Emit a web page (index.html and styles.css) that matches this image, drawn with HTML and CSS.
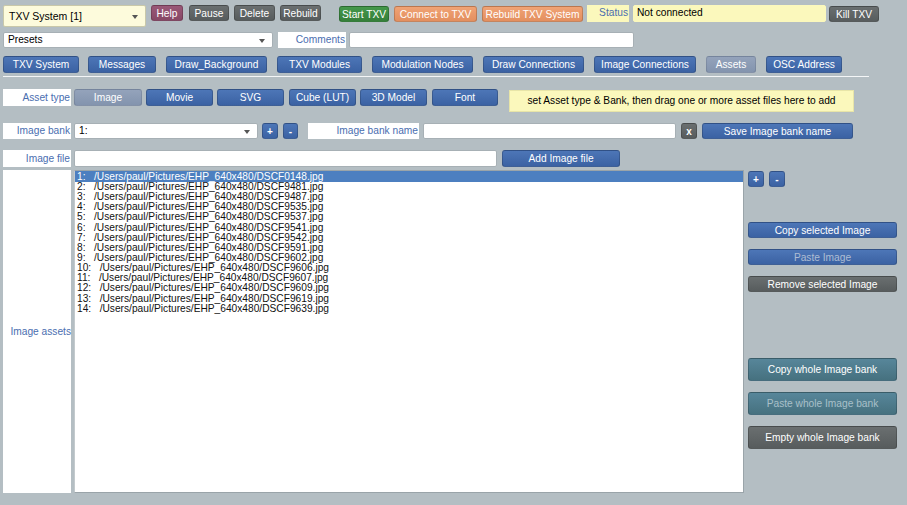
FILE: index.html
```html
<!DOCTYPE html>
<html>
<head>
<meta charset="utf-8">
<link rel="stylesheet" href="styles.css">
</head>
<body>
<div class="app">
  <div class="row r1">
    <div class="select sel-yellow w-txv">TXV System [1]<span class="caret"></span></div>
    <button class="btn purple w-help">Help</button>
    <button class="btn gray w-pause">Pause</button>
    <button class="btn gray w-delete">Delete</button>
    <button class="btn gray w-rebuild">Rebuild</button>
    <button class="btn green w-start">Start TXV</button>
    <button class="btn orange w-connect">Connect to TXV</button>
    <button class="btn orange w-rebuildtxv">Rebuild TXV System</button>
    <div class="label yellow w-status">Status</div>
    <div class="field yellow w-notconn">Not connected</div>
    <button class="btn gray w-kill">Kill TXV</button>
  </div>

  <div class="row r2">
    <div class="select w-presets">Presets<span class="caret"></span></div>
    <div class="label w-comments">Comments</div>
    <div class="field w-commentsin"></div>
  </div>

  <div class="row tabs">
    <button class="btn blue w-t1">TXV System</button>
    <button class="btn blue w-t2">Messages</button>
    <button class="btn blue w-t3">Draw_Background</button>
    <button class="btn blue w-t4">TXV Modules</button>
    <button class="btn blue w-t5">Modulation Nodes</button>
    <button class="btn blue w-t6">Draw Connections</button>
    <button class="btn blue w-t7">Image Connections</button>
    <button class="btn sel w-t8">Assets</button>
    <button class="btn blue w-t9">OSC Address</button>
  </div>

  <div class="rule"></div>

  <div class="row r-asset">
    <div class="label w-lbl">Asset type</div>
    <button class="btn sel w-a1">Image</button>
    <button class="btn blue w-a2">Movie</button>
    <button class="btn blue w-a3">SVG</button>
    <button class="btn blue w-a4">Cube (LUT)</button>
    <button class="btn blue w-a5">3D Model</button>
    <button class="btn blue w-a6">Font</button>
    <div class="hint">set Asset type &amp; Bank, then drag one or more asset files here to add</div>
  </div>

  <div class="row r-bank">
    <div class="label w-lbl">Image bank</div>
    <div class="select w-banksel">1:<span class="caret"></span></div>
    <button class="btn blue small w-plus">+</button>
    <button class="btn blue small w-minus">-</button>
    <div class="label w-bankname">Image bank name</div>
    <div class="field w-banknamein"></div>
    <button class="btn gray small w-x">x</button>
    <button class="btn blue w-save">Save Image bank name</button>
  </div>

  <div class="row r-file">
    <div class="label w-lbl">Image file</div>
    <div class="field w-filein"></div>
    <button class="btn blue w-add">Add Image file</button>
  </div>

  <div class="row r-list">
    <div class="label-col">Image assets</div>
    <div class="list">
      <div class="item selected">1:&nbsp;&nbsp; /Users/paul/Pictures/EHP_640x480/DSCF0148.jpg</div>
      <div class="item">2:&nbsp;&nbsp; /Users/paul/Pictures/EHP_640x480/DSCF9481.jpg</div>
      <div class="item">3:&nbsp;&nbsp; /Users/paul/Pictures/EHP_640x480/DSCF9487.jpg</div>
      <div class="item">4:&nbsp;&nbsp; /Users/paul/Pictures/EHP_640x480/DSCF9535.jpg</div>
      <div class="item">5:&nbsp;&nbsp; /Users/paul/Pictures/EHP_640x480/DSCF9537.jpg</div>
      <div class="item">6:&nbsp;&nbsp; /Users/paul/Pictures/EHP_640x480/DSCF9541.jpg</div>
      <div class="item">7:&nbsp;&nbsp; /Users/paul/Pictures/EHP_640x480/DSCF9542.jpg</div>
      <div class="item">8:&nbsp;&nbsp; /Users/paul/Pictures/EHP_640x480/DSCF9591.jpg</div>
      <div class="item">9:&nbsp;&nbsp; /Users/paul/Pictures/EHP_640x480/DSCF9602.jpg</div>
      <div class="item">10:&nbsp;&nbsp; /Users/paul/Pictures/EHP_640x480/DSCF9606.jpg</div>
      <div class="item">11:&nbsp;&nbsp; /Users/paul/Pictures/EHP_640x480/DSCF9607.jpg</div>
      <div class="item">12:&nbsp;&nbsp; /Users/paul/Pictures/EHP_640x480/DSCF9609.jpg</div>
      <div class="item">13:&nbsp;&nbsp; /Users/paul/Pictures/EHP_640x480/DSCF9619.jpg</div>
      <div class="item">14:&nbsp;&nbsp; /Users/paul/Pictures/EHP_640x480/DSCF9639.jpg</div>
    </div>
    <div class="side">
      <div class="pm">
        <button class="btn blue small w-plus">+</button>
        <button class="btn blue small w-minus2">-</button>
      </div>
      <button class="btn blue wide b-copy">Copy selected Image</button>
      <button class="btn blue wide dim b-paste">Paste Image</button>
      <button class="btn gray wide b-remove">Remove selected Image</button>
      <button class="btn teal wide tall b-copyall">Copy whole Image bank</button>
      <button class="btn teal wide tall dim b-pasteall">Paste whole Image bank</button>
      <button class="btn gray wide tall b-empty">Empty whole Image bank</button>
    </div>
  </div>
</div>
</body>
</html>
```

FILE: styles.css
```css
* { box-sizing: border-box; }
html, body { margin: 0; padding: 0; }
body {
  background: #b4bec3;
  font-family: "Liberation Sans", Arial, Helvetica, sans-serif;
  font-size: 10px;
  color: #000;
  width: 907px;
  height: 505px;
  overflow: hidden;
}
.app { padding-left: 3px; }
.row { display: flex; align-items: flex-start; }

.btn {
  font-family: inherit;
  font-size: 10.2px;
  color: #fff;
  height: 16px;
  padding: 0;
  margin: 0;
  border-radius: 3px;
  border: 1px solid rgba(0,0,0,0.18);
  line-height: 13px;
  text-align: center;
  white-space: nowrap;
  flex: none;
  cursor: default;
}
.blue { background: linear-gradient(#4d76b7, #3b62a3); }
.sel { background: linear-gradient(#94a3bb, #8394ae); border-color: rgba(0,0,0,0.1); }
.gray { background: linear-gradient(#6a6f70, #575c5d); }
.purple { background: linear-gradient(#9a5878, #874866); }
.green { background: linear-gradient(#44984a, #357f3a); }
.orange { background: linear-gradient(#f0a375, #e38f5f); }
.teal { background: linear-gradient(#57869a, #46717f); }
.dim { color: #aebdd3; }
.teal.dim { color: #a9c0c9; }
.small { font-weight: bold; font-size: 10px; }

.select, .field, .label {
  height: 16px;
  background: #fff;
  border: 1px solid #a7b0b5;
  border-radius: 2px;
  flex: none;
  line-height: 14px;
  white-space: nowrap;
  font-size: 10.2px;
}
.select { position: relative; padding-left: 4px; }
.caret {
  position: absolute;
  right: 7px;
  top: 6px;
  width: 0; height: 0;
  border-left: 3.5px solid transparent;
  border-right: 3.5px solid transparent;
  border-top: 4px solid #555;
}
.field { padding-left: 3px; }
.label {
  color: #4a6eb0;
  text-align: right;
  padding-right: 0;
  border-color: #fff;
  border-radius: 0;
}
.yellow { background: #fbf8bc; border-color: #fbf8bc; }

/* row 1 */
.r1 { margin-top: 5px; height: 22px; }
.sel-yellow { background: #fdfbdc; height: 22px; line-height: 20px; width: 143px; border-color: #c9c8a9; font-size: 10.5px; padding-left: 5px; }
.sel-yellow .caret { top: 9px; }
.w-txv { margin-right: 5px; }
.w-help { width: 32px; margin-right: 6px; }
.w-pause { width: 40px; margin-right: 5px; }
.w-delete { width: 41px; margin-right: 5px; }
.w-rebuild { width: 41px; margin-right: 18px; }
.w-start { width: 50px; margin-right: 5px; margin-top: 1px; }
.w-connect { width: 83px; margin-right: 5px; margin-top: 1px; }
.w-rebuildtxv { width: 101px; margin-right: 4px; margin-top: 1px; }
.w-status { width: 42px; height: 17px; margin-right: 4px; }
.w-notconn { width: 193px; height: 17px; margin-right: 3px; }
.w-kill { width: 50px; margin-top: 1px; }

/* row 2 */
.r2 { margin-top: 5px; height: 16px; }
.w-presets { width: 270px; margin-right: 5px; }
.w-comments { width: 68px; margin-right: 3px; }
.w-commentsin { width: 285px; }

/* tabs */
.tabs { margin-top: 8px; height: 17px; }
.tabs .btn { height: 17px; line-height: 14px; }
.w-t1 { width: 76px; margin-right: 9px; }
.w-t2 { width: 68px; margin-right: 10px; }
.w-t3 { width: 101px; margin-right: 10px; }
.w-t4 { width: 85px; margin-right: 10px; }
.w-t5 { width: 101px; margin-right: 10px; }
.w-t6 { width: 101px; margin-right: 10px; }
.w-t7 { width: 102px; margin-right: 10px; }
.w-t8 { width: 50px; margin-right: 10px; }
.w-t9 { width: 76px; }

.rule { margin-top: 3px; width: 866px; height: 1px; background: #f4f6f7; }

/* asset row */
.r-asset { margin-top: 12px; height: 23px; }
.r-asset .btn { height: 17px; line-height: 14px; }
.w-lbl { width: 68px; margin-right: 3px; }
.r-asset .w-lbl { height: 17px; line-height: 15px; }
.w-a1 { width: 68px; margin-right: 4px; }
.w-a2 { width: 67px; margin-right: 4px; }
.w-a3 { width: 67px; margin-right: 5px; }
.w-a4 { width: 67px; margin-right: 4px; }
.w-a5 { width: 67px; margin-right: 5px; }
.w-a6 { width: 66px; margin-right: 11px; }
.hint {
  margin-top: 1px;
  width: 345px;
  height: 22px;
  background: #fbf8bc;
  border: 1px solid #e8e5a8;
  text-align: center;
  line-height: 20px;
  font-size: 10.2px;
}

/* bank row */
.r-bank { margin-top: 11px; height: 16px; }
.w-banksel { width: 184px; margin-right: 4px; }
.w-plus { width: 16px; margin-right: 5px; }
.w-minus { width: 15px; margin-right: 10px; }
.w-bankname { width: 111px; margin-right: 4px; }
.w-banknamein { width: 253px; margin-right: 5px; }
.w-x { width: 16px; margin-right: 5px; }
.w-save { width: 151px; }

/* file row */
.r-file { margin-top: 11px; height: 17px; }
.r-file .w-lbl, .r-file .field { height: 17px; line-height: 15px; }
.w-filein { width: 423px; margin-right: 5px; }
.w-add { width: 118px; height: 17px; line-height: 14px; }

/* list */
.r-list { margin-top: 3px; height: 323px; }
.label-col {
  width: 68px;
  height: 323px;
  margin-right: 3px;
  background: #fff;
  color: #4a6eb0;
  font-size: 10.2px;
  display: flex;
  align-items: center;
  justify-content: flex-end;
  flex: none;
}
.list {
  width: 670px;
  height: 323px;
  background: #fff;
  border: 1px solid #9aa4a9;
  border-left-color: #c3cacd;
  flex: none;
  margin-right: 4px;
}
.item {
  height: 10.15px;
  line-height: 10.15px;
  font-size: 10.2px;
  padding-left: 2px;
  white-space: nowrap;
  color: #111;
}
.item.selected { background: #4c7fc0; color: #fff; height: 11px; line-height: 11px; }

.side { width: 150px; display: flex; flex-direction: column; align-items: flex-start; flex: none; }
.pm { display: flex; margin-top: 1px; }
.w-minus2 { width: 16px; }
.wide { width: 149px; height: 16px; }
.tall { height: 23px; line-height: 20px; }
.b-copy { margin-top: 35px; }
.b-paste { margin-top: 11px; }
.b-remove { margin-top: 11px; }
.b-copyall { margin-top: 66px; }
.b-pasteall { margin-top: 11px; }
.b-empty { margin-top: 11px; }
```
